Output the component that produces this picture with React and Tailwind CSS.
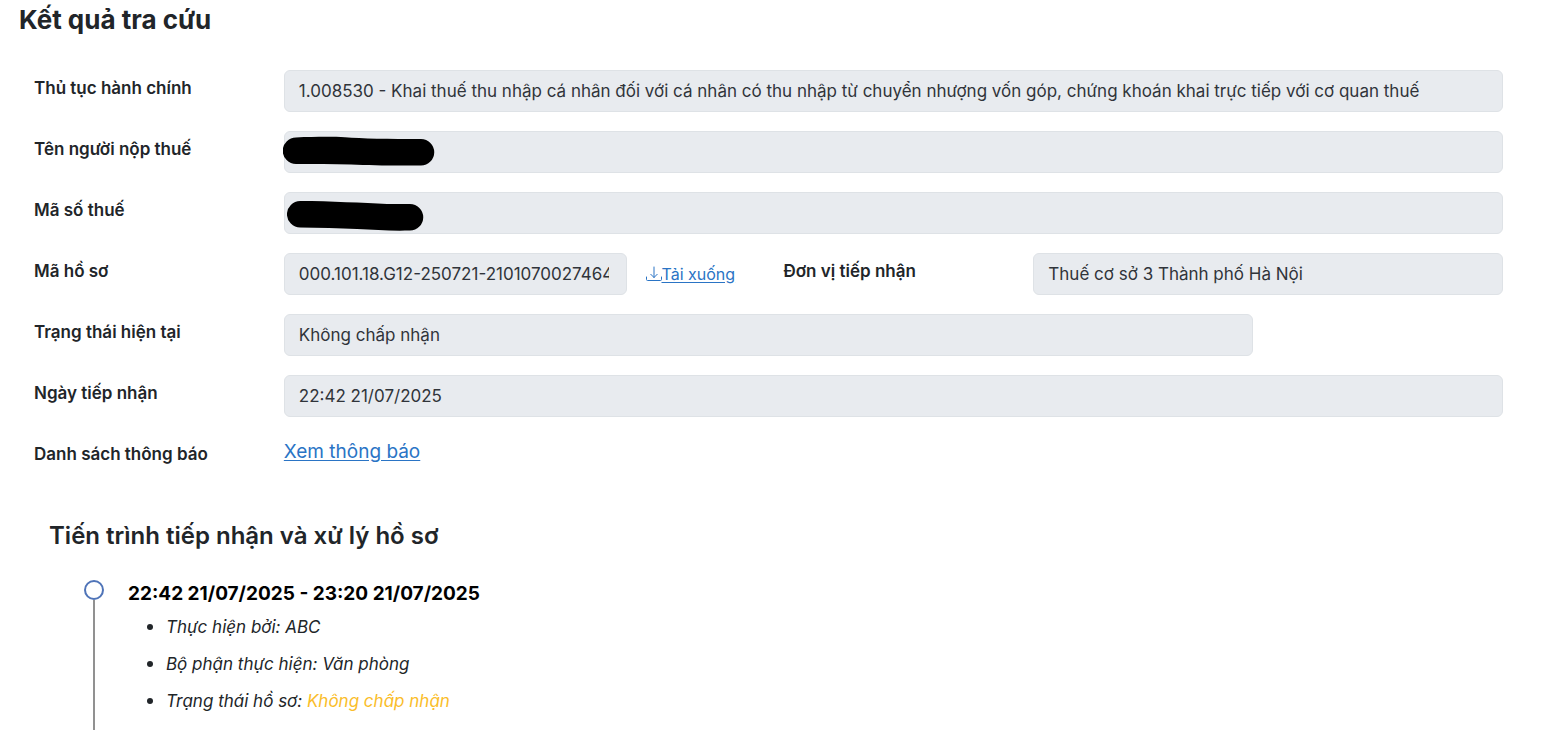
import { useId } from "react";

const labelClass = "col-span-2 px-[15px] pt-[5px] text-[17px] leading-[26px] font-semibold";

function Field({ label, value, span, redaction, children }) {
  const id = useId();
  return (
    <>
      <label htmlFor={id} className={labelClass}>{label}</label>
      <div className={`${span} relative flex items-center px-[15px]`}>
        <input
          id={id}
          readOnly
          defaultValue={value}
          className="h-[42px] w-full min-w-0 flex-1 rounded-md border border-[#dee2e6] bg-[#e8ebef] pr-[17px] pl-[14px] text-[17px] text-[#30343a] outline-none"
        />
        {redaction}
        {children}
      </div>
    </>
  );
}

const rowClass = "grid grid-cols-12";

export default function App() {
  return (
    <main className="min-h-screen overflow-hidden bg-white pr-[49px] pl-[19px] font-['Inter',sans-serif] text-[#212529]">
      <h1 className="pt-[3px] text-[26px] leading-[34px] font-bold">Kết quả tra cứu</h1>

      <form className="mt-[33px] flex flex-col gap-[19px]">
        <div className={rowClass}>
          <Field
            label="Thủ tục hành chính"
            span="col-span-10"
            value="1.008530 - Khai thuế thu nhập cá nhân đối với cá nhân có thu nhập từ chuyển nhượng vốn góp, chứng khoán khai trực tiếp với cơ quan thuế"
          />
        </div>
        <div className={rowClass}>
          <Field
            label="Tên người nộp thuế"
            span="col-span-10"
            value=""
            redaction={
              <svg className="absolute top-[5px] left-[14px]" width="152" height="32" viewBox="0 0 152 32" aria-hidden="true">
                <path d="M13 1.500C32 .7 50 .7 62 1.200C78 2.500 106 3 138 3A13.250 13.250 0 0 1 138 29.500C110 29.700 88 29.500 68 28.500C50 28 30 28 13 28A13.250 13.250 0 0 1 13 1.500Z" />
              </svg>
            }
          />
        </div>
        <div className={rowClass}>
          <Field
            label="Mã số thuế"
            span="col-span-10"
            value=""
            redaction={
              <svg className="absolute top-[7px] left-[18px]" width="138" height="33" viewBox="0 0 138 33" aria-hidden="true">
                <path d="M13.200 2C44 2 76 4 100 5L123 5A13.200 13.200 0 0 1 123 31.500C104 32 88 31 70 30C52 29 32 29 13.200 28.500A13.200 13.200 0 0 1 13.200 2Z" />
              </svg>
            }
          />
        </div>
        <div className={rowClass}>
          <Field label="Mã hồ sơ" span="col-span-4" value="000.101.18.G12-250721-2101070027464">
            <a href="#download" className="ml-[19px] flex w-[108px] items-center text-[16px] text-[#2a74c5] underline underline-offset-2">
              <svg width="16" height="16" viewBox="0 0 16 16" fill="none" stroke="currentColor" strokeWidth="1" strokeLinecap="round" strokeLinejoin="round" aria-hidden="true">
                <path d="M.5 11v2.500a1 1 0 0 0 1 1h13a1 1 0 0 0 1-1V11M8 1v10.500M4.800 8.300 8 11.500l3.200-3.200" />
              </svg>
              Tải xuống
            </a>
          </Field>
          <Field label="Đơn vị tiếp nhận" span="col-span-4" value="Thuế cơ sở 3 Thành phố Hà Nội" />
        </div>
        <div className={rowClass}>
          <Field label="Trạng thái hiện tại" span="col-span-8" value="Không chấp nhận" />
        </div>
        <div className={rowClass}>
          <Field label="Ngày tiếp nhận" span="col-span-10" value="22:42 21/07/2025" />
        </div>
        <div className={rowClass}>
          <div className={labelClass}>Danh sách thông báo</div>
          <div className="col-span-10 px-[15px] pt-[2px]">
            <a href="#notices" className="text-[19px] leading-[28px] text-[#2a74c5] underline underline-offset-2">Xem thông báo</a>
          </div>
        </div>
      </form>

      <section className="mt-[53px] pl-[30px]">
        <h2 className="text-[24px] leading-[32px] font-semibold">Tiến trình tiếp nhận và xử lý hồ sơ</h2>
        <ol className="mt-[28px] pl-[35px]">
          <li className="flex gap-6">
            <div className="flex w-5 flex-col items-center" aria-hidden="true">
              <span className="size-5 rounded-full border-2 border-[#4f74b8]" />
              <span className="w-[2px] flex-1 bg-[#919191]" />
            </div>
            <div className="pb-8">
              <h3 className="text-[19px] leading-[28px] font-bold text-black">22:42 21/07/2025 - 23:20 21/07/2025</h3>
              <ul className="flex list-disc flex-col gap-[10px] pt-[5px] pl-[38px] text-[17px] leading-[26px] marker:text-[20px]">
                <li><em>Thực hiện bởi: ABC</em></li>
                <li><em>Bộ phận thực hiện: Văn phòng</em></li>
                <li><em>Trạng thái hồ sơ: <span className="text-[#fabd2a]">Không chấp nhận</span></em></li>
              </ul>
            </div>
          </li>
        </ol>
      </section>
    </main>
  );
}
